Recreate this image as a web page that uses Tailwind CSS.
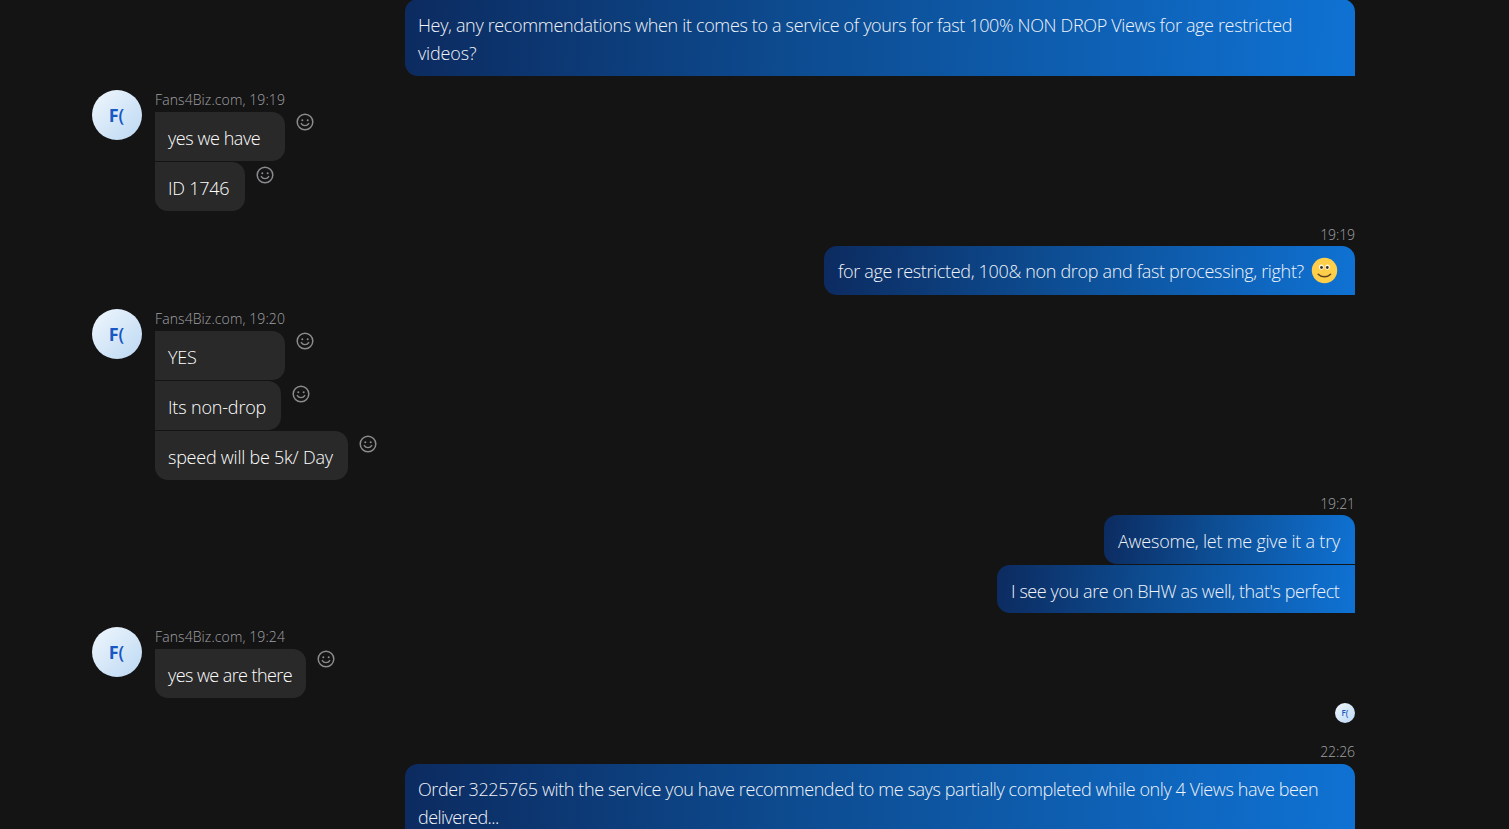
<!DOCTYPE html>
<html lang="en">
<head>
<meta charset="utf-8">
<title>Chat</title>
<script src="https://cdn.jsdelivr.net/npm/@tailwindcss/browser@4"></script>
</head>
<body class="h-[829px] overflow-hidden bg-[#141414] font-['Open_Sans',sans-serif] text-[18px] font-light leading-[28px] text-white">
<svg class="hidden">
  <symbol id="react" viewBox="0 0 18 18">
    <circle cx="9" cy="9" r="7.8" fill="none" stroke="#8b8b8e" stroke-width="1.5"/>
    <circle cx="6.3" cy="7.2" r="1" fill="#8b8b8e"/><circle cx="11.7" cy="7.2" r="1" fill="#8b8b8e"/>
    <path d="M5.3 10.6c1.6 2.7 5.8 2.7 7.4 0" fill="none" stroke="#8b8b8e" stroke-width="1.4" stroke-linecap="round"/>
  </symbol>
</svg>
<main class="flex h-[829px] w-[1355px] flex-col overflow-hidden pl-[92px] whitespace-nowrap">

  <section class="-mt-px flex shrink-0 flex-col items-end">
    <div class="h-[76.5px] w-[950px] rounded-l-[13px] rounded-tr-[13px] bg-linear-[92deg,#0c2b60,#0d4c91_42%,#0f72d3] pt-3 pl-[13px] text-[#f0f3f8]">
      <p class="tracking-[-0.342px]">Hey, any recommendations when it comes to a service of yours for fast 100% NON DROP Views for age restricted</p>
      <p class="tracking-[-0.15px]">videos?</p>
    </div>
  </section>

  <section class="mt-[14.5px] flex shrink-0 gap-[13px]">
    <div class="flex size-[50px] items-center justify-center rounded-full bg-linear-[135deg,#f0f7fd,#bcd8f3] pr-px text-[18px] font-bold text-[#1857c4]"><span>F</span><span class="font-semibold">(</span></div>
    <div>
      <p class="h-[22px] text-[14px] leading-[19px] tracking-[0.1px] text-[#a0a0a4]">Fans4Biz.com, 19:19</p>
      <div class="flex flex-col gap-[1.5px]">
        <div class="flex gap-[11px]"><p class="h-[48.5px] w-[130px] rounded-r-[13px] bg-[#292929] pt-3 pl-[13px] tracking-[-0.45px]">yes we have</p><svg class="mt-px size-[18px]"><use href="#react"/></svg></div>
        <div class="flex gap-[11px]"><p class="h-[48.5px] w-[90px] rounded-r-[13px] rounded-bl-[13px] bg-[#292929] pt-3 pl-[13px] tracking-[-0.25px]">ID 1746</p><svg class="mt-1 size-[18px]"><use href="#react"/></svg></div>
      </div>
    </div>
  </section>

  <section class="mt-[13.5px] flex shrink-0 flex-col items-end">
    <p class="h-[22px] text-[14px] leading-[22px] tracking-[-0.1px] text-[#a0a0a4]">19:19</p>
    <div class="flex h-[48.5px] w-[531px] rounded-l-[13px] rounded-tr-[13px] bg-linear-[94deg,#0c2b60,#0d4c91_42%,#0f72d3] pt-[11.2px] pl-[14px] text-[#f0f3f8]">
      <p class="w-[473px] tracking-[-0.33px]">for age restricted, 100&amp; non drop and fast processing, right?</p>
      <svg class="size-[27px] -mt-[0.2px]" viewBox="0 0 27 27">
        <circle cx="13.5" cy="13.5" r="12.7" fill="#ffcf49"/>
        <ellipse cx="10.3" cy="10.2" rx="2.3" ry="2.6" fill="#fffdf4"/><ellipse cx="16.5" cy="10.2" rx="2.3" ry="2.6" fill="#fffdf4"/>
        <circle cx="10.5" cy="10.5" r="1.4" fill="#402f21"/><circle cx="16.3" cy="10.5" r="1.4" fill="#402f21"/>
        <path d="M7.2 17.2c3.1 3.3 9.3 3.3 12.4 0" fill="none" stroke="#5c4322" stroke-width="1.5" stroke-linecap="round"/>
      </svg>
    </div>
  </section>

  <section class="mt-[14.5px] flex shrink-0 gap-[13px]">
    <div class="flex size-[50px] items-center justify-center rounded-full bg-linear-[135deg,#f0f7fd,#bcd8f3] pr-px text-[18px] font-bold text-[#1857c4]"><span>F</span><span class="font-semibold">(</span></div>
    <div>
      <p class="h-[22px] text-[14px] leading-[19px] tracking-[0.1px] text-[#a0a0a4]">Fans4Biz.com, 19:20</p>
      <div class="flex flex-col gap-[1.5px]">
        <div class="flex gap-[11px]"><p class="h-[48.5px] w-[130px] rounded-r-[13px] bg-[#292929] pt-3 pl-[13px] tracking-[-0.2px]">YES</p><svg class="mt-px size-[18px]"><use href="#react"/></svg></div>
        <div class="flex gap-[11px]"><p class="h-[48.5px] w-[126px] rounded-r-[13px] bg-[#292929] pt-3 pl-[13px] tracking-[-0.17px]">Its non-drop</p><svg class="mt-1 size-[18px]"><use href="#react"/></svg></div>
        <div class="flex gap-[11px]"><p class="h-[48.5px] w-[193px] rounded-r-[13px] rounded-bl-[13px] bg-[#292929] pt-3 pl-[13px] tracking-[-0.24px]">speed will be 5k/ Day</p><svg class="mt-1 size-[18px]"><use href="#react"/></svg></div>
      </div>
    </div>
  </section>

  <section class="mt-[13.5px] flex shrink-0 flex-col items-end">
    <p class="h-[22px] text-[14px] leading-[22px] tracking-[-0.1px] text-[#a0a0a4]">19:21</p>
    <div class="flex flex-col items-end gap-[1.2px] text-[#f0f3f8]">
      <p class="h-[48.5px] w-[251px] rounded-l-[13px] rounded-tr-[13px] bg-linear-[98deg,#0c2b60,#0d4c91_42%,#0f72d3] pt-3 pl-[14px] tracking-[-0.23px]">Awesome, let me give it a try</p>
      <p class="h-[48.5px] w-[358px] rounded-l-[13px] bg-linear-[96deg,#0c2b60,#0d4c91_42%,#0f72d3] pt-3 pl-[14px] tracking-[-0.41px]">I see you are on BHW as well, that's perfect</p>
    </div>
  </section>

  <section class="mt-[14.3px] flex shrink-0 gap-[13px]">
    <div class="flex size-[50px] items-center justify-center rounded-full bg-linear-[135deg,#f0f7fd,#bcd8f3] pr-px text-[18px] font-bold text-[#1857c4]"><span>F</span><span class="font-semibold">(</span></div>
    <div>
      <p class="h-[22px] text-[14px] leading-[19px] tracking-[0.1px] text-[#a0a0a4]">Fans4Biz.com, 19:24</p>
      <div class="flex gap-[11px]"><p class="h-[48.5px] w-[151px] rounded-r-[13px] rounded-bl-[13px] bg-[#292929] pt-3 pl-[13px] tracking-[-0.58px]">yes we are there</p><svg class="mt-px size-[18px]"><use href="#react"/></svg></div>
    </div>
  </section>

  <div class="mt-[5px] flex size-5 shrink-0 items-center justify-center self-end rounded-full bg-linear-[135deg,#f0f7fd,#bcd8f3] text-[8px] font-semibold text-[#1857c4]">F(</div>

  <section class="mt-[18.8px] flex shrink-0 flex-col items-end">
    <p class="h-[22px] text-[14px] leading-[20px] tracking-[-0.1px] text-[#a0a0a4]">22:26</p>
    <div class="h-[76.5px] w-[950px] rounded-l-[13px] rounded-tr-[13px] bg-linear-[92deg,#0c2b60,#0d4c91_42%,#0f72d3] pt-[11.4px] pl-[13px] text-[#f0f3f8]">
      <p class="tracking-[-0.407px]">Order 3225765 with the service you have recommended to me says partially completed while only 4 Views have been</p>
      <p class="tracking-[-0.55px]">delivered...</p>
    </div>
  </section>
</main>
</body>
</html>
